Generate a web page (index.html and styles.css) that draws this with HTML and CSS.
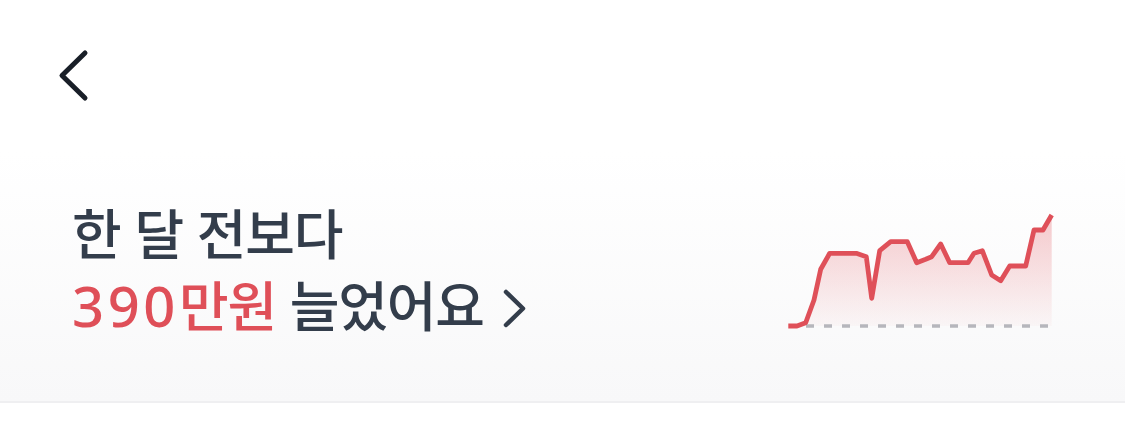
FILE: index.html
```html
<!DOCTYPE html>
<html lang="ko">
<head>
  <meta charset="UTF-8">
  <meta name="viewport" content="width=device-width, initial-scale=1.0">
  <title>자산 변화</title>
  <link rel="stylesheet" href="styles.css">
</head>
<body>
  <header class="top-bar">
    <button type="button" class="back-btn" aria-label="뒤로">
      <svg width="36" height="56" viewBox="0 0 36 56">
        <path d="M29 6 L6 28.5 L29 51" fill="none" stroke="#191f28" stroke-width="5" stroke-linecap="round" stroke-linejoin="round"/>
      </svg>
    </button>
  </header>

  <section class="summary-card">
    <div class="summary-text">
      <p class="line">한 달 전보다</p>
      <p class="line"><span class="amount"><span class="num">390</span>만원</span> 늘었어요<svg class="arrow" width="26" height="40" viewBox="0 0 26 40"><path d="M4 3 L21 19.5 L4 36" fill="none" stroke="#333d4b" stroke-width="4.5" stroke-linecap="round" stroke-linejoin="round"/></svg></p>
    </div>

    <svg class="trend" width="270" height="120" viewBox="0 0 270 120">
      <defs>
        <linearGradient id="trendFill" x1="0" y1="0" x2="0" y2="1">
          <stop offset="0" stop-color="#e15058" stop-opacity="0.3"/>
          <stop offset="1" stop-color="#e15058" stop-opacity="0.03"/>
        </linearGradient>
      </defs>
      <path d="M3.3 116 L12 116 L20.7 112.7 L29 90 L35.7 59.3 L44.7 43.3 L71.3 43.3 L81.3 46.7 L86.7 88.3 L94.7 40.7 L105.7 31.7 L122.3 31.7 L131.7 52.7 L140.7 49.3 L146.7 46.7 L155.7 34 L164.7 52.7 L183 52.7 L189 43.3 L197.3 40.7 L206.7 65 L215.7 70.7 L224.7 56 L240.7 56 L249 20 L258 20 L266.7 5 L266.7 116 Z" fill="url(#trendFill)"/>
      <line x1="21" y1="116" x2="266" y2="116" stroke="#b6b6bc" stroke-width="3.5" stroke-dasharray="8 10"/>
      <polyline points="3.3,116 12,116 20.7,112.7 29,90 35.7,59.3 44.7,43.3 71.3,43.3 81.3,46.7 86.7,88.3 94.7,40.7 105.7,31.7 122.3,31.7 131.7,52.7 140.7,49.3 146.7,46.7 155.7,34 164.7,52.7 183,52.7 189,43.3 197.3,40.7 206.7,65 215.7,70.7 224.7,56 240.7,56 249,20 258,20 266.7,5" fill="none" stroke="#df5059" stroke-width="4.8" stroke-linejoin="round"/>
    </svg>
  </section>
</body>
</html>
```

FILE: styles.css
```css
* {
  margin: 0;
  padding: 0;
  box-sizing: border-box;
}

body {
  background: white;
  font-family: "Noto Sans CJK KR", "Noto Sans", sans-serif;
  width: 1125px;
  height: 424px;
  overflow: hidden;
}

.top-bar {
  height: 152px;
  padding: 47px 0 0 56px;
}

.back-btn {
  background: none;
  border: none;
  display: block;
  cursor: pointer;
}

.back-btn svg {
  display: block;
}

.summary-card {
  height: 251px;
  padding: 44px 70px 0 72px;
  display: flex;
  justify-content: space-between;
  align-items: flex-start;
  background: linear-gradient(180deg, #ffffff 0%, #f8f8f9 100%);
  border-bottom: 2px solid #efeff1;
}

.summary-text {
  color: #333d4b;
  font-size: 54px;
  font-weight: 500;
  line-height: 72px;
  letter-spacing: -1.2px;
}

.line {
  white-space: nowrap;
}

.amount {
  color: #df4f58;
}

.num {
  font-family: "Noto Sans", sans-serif;
  font-size: 56px;
  letter-spacing: 3.6px;
}

.arrow {
  display: inline-block;
  vertical-align: -2px;
  margin-left: 18px;
}

.trend {
  display: block;
  margin-top: 14px;
}
```
